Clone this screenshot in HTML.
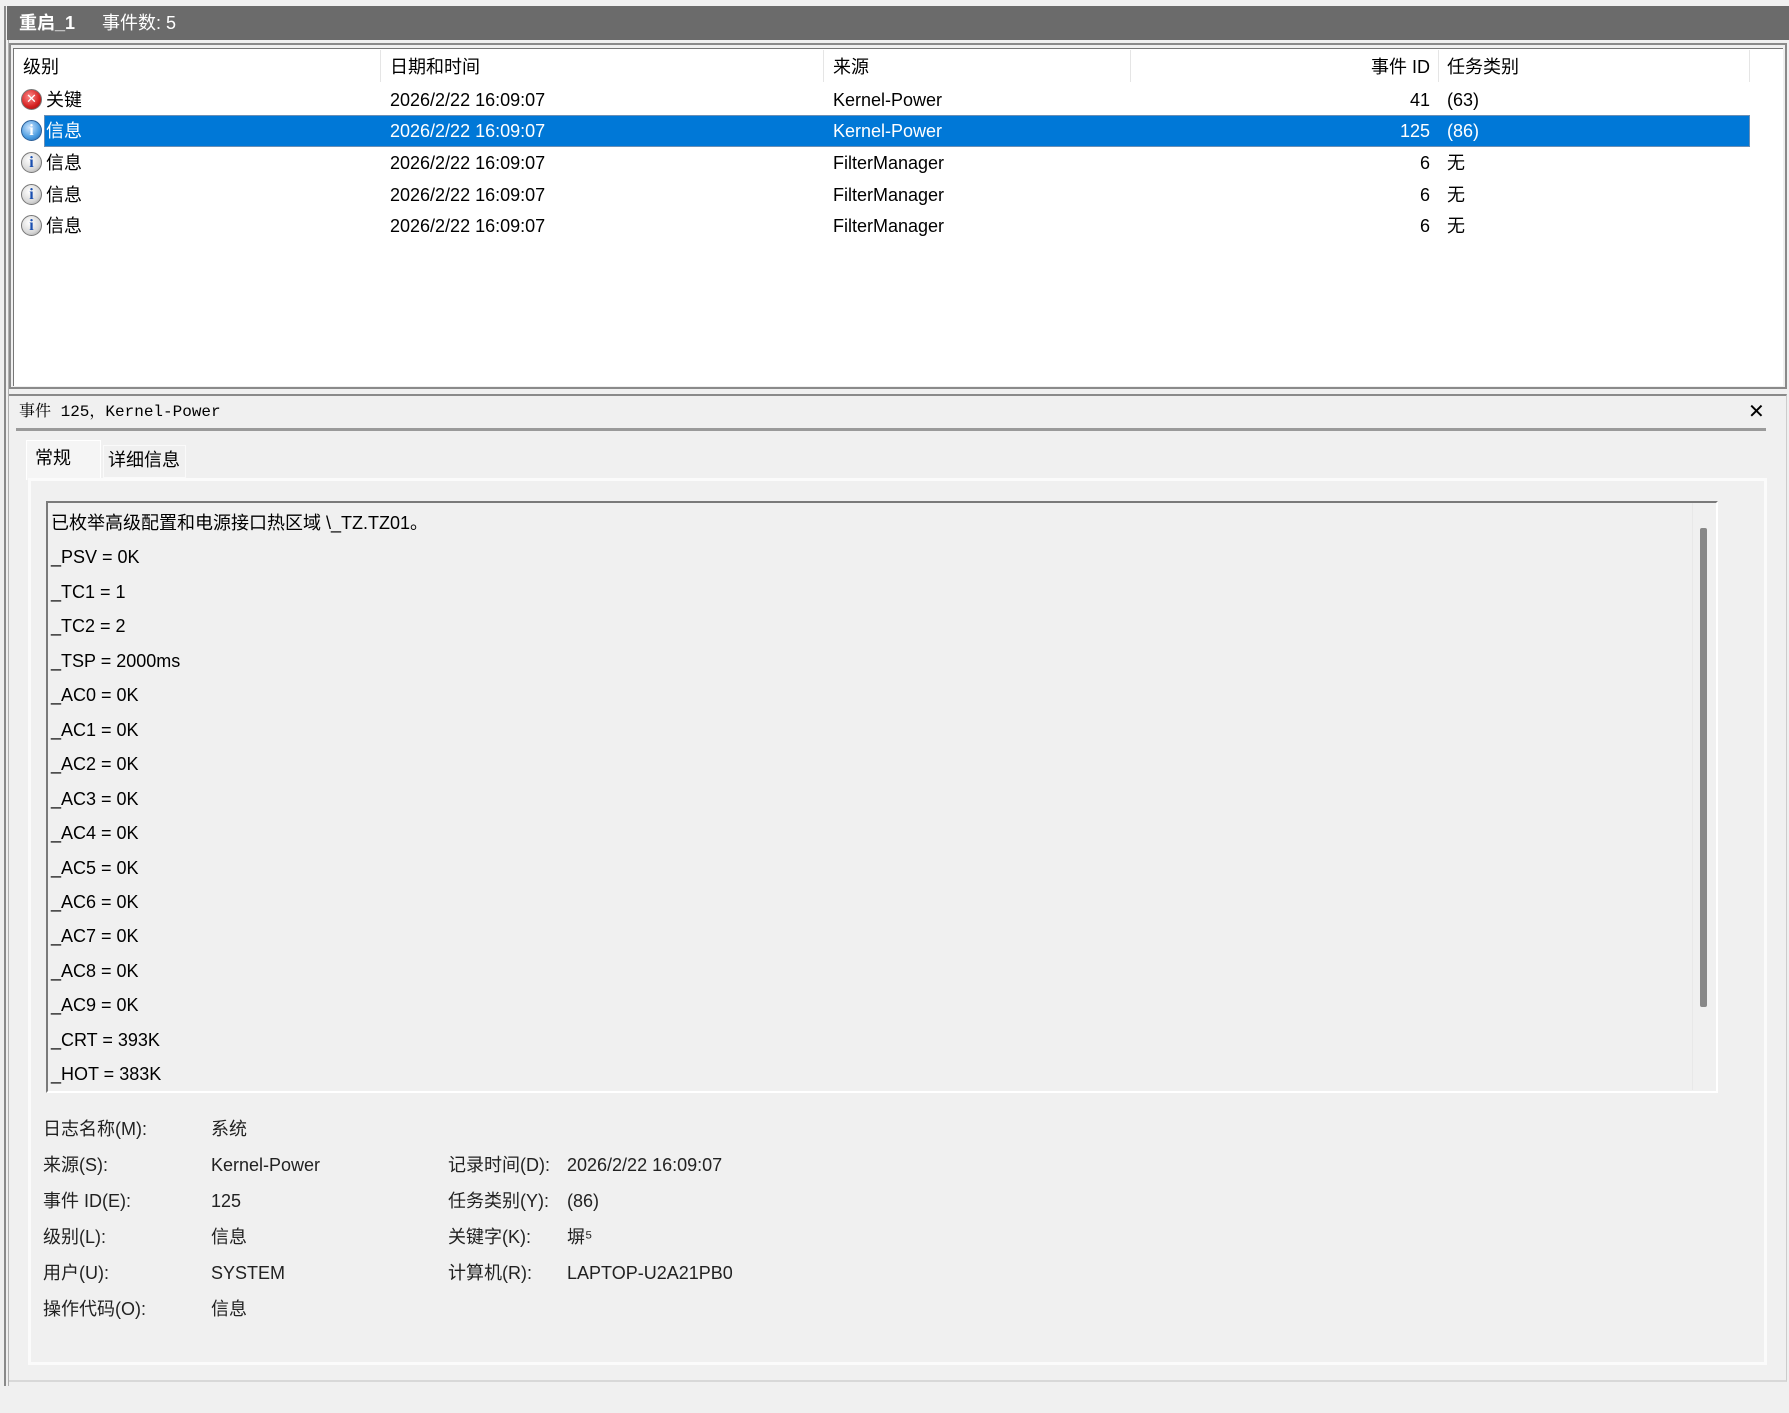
<!DOCTYPE html>
<html><head><meta charset="utf-8"><style>
*{margin:0;padding:0;box-sizing:border-box}
body{width:1789px;height:1413px;background:#f0f0f0;position:relative;overflow:hidden;font-family:"Liberation Sans","Noto Sans CJK SC",sans-serif;font-size:18px;color:#000}
.a{position:absolute;white-space:nowrap}
.t{line-height:24px}
.ico{position:absolute;width:21px;height:21px;border-radius:50%}
.info{background:radial-gradient(circle at 40% 35%,#fff,#d8d8d8 60%,#9a9a9a);border:1px solid #777}
.info::after{content:"i";position:absolute;left:0;right:0;top:0;text-align:center;font:bold 16px/20px "Liberation Serif",serif;color:#1a4fb0}
.infosel{background:radial-gradient(circle at 40% 35%,#cfe6ff,#4a9be0 60%,#1d5fa8);border:1px solid #2a5e98}
.infosel::after{content:"i";position:absolute;left:0;right:0;top:0;text-align:center;font:bold 16px/20px "Liberation Serif",serif;color:#fff}
.err{background:radial-gradient(circle at 40% 35%,#ff8a8a,#d42020 60%,#8a0c0c);border:1px solid #777}
.err::after{content:"✕";position:absolute;left:0;right:0;top:0;text-align:center;font:bold 13px/20px "DejaVu Sans",sans-serif;color:#fff}
</style></head><body>
<div class="a" style="left:4px;top:6px;width:5px;height:1380px;border-left:2px solid #8a8a8a;border-right:1px solid #b0b0b0"></div>
<div class="a" style="left:7px;top:6px;width:1782px;height:34px;background:#6b6b6b"></div>
<div class="a t" style="left:19px;top:11px;color:#fff;font-size:18px;font-weight:bold">重启_1</div>
<div class="a t" style="left:102px;top:11px;color:#fff;font-size:18px">事件数: 5</div>
<div class="a" style="left:9px;top:43px;width:1778px;height:346px;border:2px solid #8a8a8a;background:#f0f0f0"></div>
<div class="a" style="left:13px;top:48px;width:1770px;height:338px;background:#fff;border-left:1px solid #777;border-top:1px solid #777"></div>
<div class="a" style="left:380px;top:50px;width:1px;height:32px;background:#e5e5e5"></div>
<div class="a" style="left:823px;top:50px;width:1px;height:32px;background:#e5e5e5"></div>
<div class="a" style="left:1130px;top:50px;width:1px;height:32px;background:#e5e5e5"></div>
<div class="a" style="left:1438px;top:50px;width:1px;height:32px;background:#e5e5e5"></div>
<div class="a" style="left:1749px;top:50px;width:1px;height:32px;background:#e5e5e5"></div>
<div class="a t" style="left:23px;top:55px">级别</div>
<div class="a t" style="left:390px;top:55px">日期和时间</div>
<div class="a t" style="left:833px;top:55px">来源</div>
<div class="a t" style="left:1330px;top:55px;width:100px;text-align:right">事件 ID</div>
<div class="a t" style="left:1447px;top:55px">任务类别</div>
<div class="a" style="left:44px;top:115px;width:1706px;height:32px;background:#0078d7;border:1px solid #6b8fb5"></div>
<div class="ico err" style="left:21px;top:89px"></div>
<div class="a t" style="left:46px;top:88px">关键</div><div class="a t" style="left:390px;top:88px">2026/2/22 16:09:07</div><div class="a t" style="left:833px;top:88px">Kernel-Power</div><div class="a t" style="left:1330px;top:88px;width:100px;text-align:right">41</div><div class="a t" style="left:1447px;top:88px">(63)</div>
<div class="ico infosel" style="left:21px;top:120px"></div>
<div class="a t" style="left:46px;top:119px;color:#fff">信息</div><div class="a t" style="left:390px;top:119px;color:#fff">2026/2/22 16:09:07</div><div class="a t" style="left:833px;top:119px;color:#fff">Kernel-Power</div><div class="a t" style="left:1330px;top:119px;width:100px;text-align:right;color:#fff">125</div><div class="a t" style="left:1447px;top:119px;color:#fff">(86)</div>
<div class="ico info" style="left:21px;top:152px"></div>
<div class="a t" style="left:46px;top:151px">信息</div><div class="a t" style="left:390px;top:151px">2026/2/22 16:09:07</div><div class="a t" style="left:833px;top:151px">FilterManager</div><div class="a t" style="left:1330px;top:151px;width:100px;text-align:right">6</div><div class="a t" style="left:1447px;top:151px">无</div>
<div class="ico info" style="left:21px;top:184px"></div>
<div class="a t" style="left:46px;top:183px">信息</div><div class="a t" style="left:390px;top:183px">2026/2/22 16:09:07</div><div class="a t" style="left:833px;top:183px">FilterManager</div><div class="a t" style="left:1330px;top:183px;width:100px;text-align:right">6</div><div class="a t" style="left:1447px;top:183px">无</div>
<div class="ico info" style="left:21px;top:215px"></div>
<div class="a t" style="left:46px;top:214px">信息</div><div class="a t" style="left:390px;top:214px">2026/2/22 16:09:07</div><div class="a t" style="left:833px;top:214px">FilterManager</div><div class="a t" style="left:1330px;top:214px;width:100px;text-align:right">6</div><div class="a t" style="left:1447px;top:214px">无</div>

<div class="a" style="left:9px;top:394px;width:1778px;height:988px;border-top:2px solid #8a8a8a;border-right:1px solid #ccc;border-bottom:2px solid #d8d8d8"></div>
<div class="a" style="left:19px;top:401px;font-family:'Liberation Mono','Noto Serif CJK SC',monospace;font-size:16px;line-height:22px">事件 125，Kernel-Power</div>
<div class="a" style="left:1748px;top:400px;font:bold 20px/22px 'DejaVu Sans',sans-serif">✕</div>
<div class="a" style="left:16px;top:428px;width:1750px;height:3px;background:#9a9a9a"></div>
<div class="a" style="left:103px;top:445px;width:83px;height:33px;background:#f0f0f0;border:1px solid #fafafa"></div>
<div class="a" style="left:26px;top:440px;width:75px;height:40px;background:#f5f5f5;border:1px solid #fff;border-bottom:none"></div>
<div class="a t" style="left:35px;top:446px;font-size:18px">常规</div>
<div class="a t" style="left:108px;top:448px;font-size:18px">详细信息</div>
<div class="a" style="left:28px;top:478px;width:1739px;height:887px;border:3px solid #fbfbfb;background:#f0f0f0"></div>
<div class="a" style="left:46px;top:501px;width:1672px;height:592px;border-top:2px solid #7a7a7a;border-left:2px solid #7a7a7a;border-right:2px solid #fff;border-bottom:2px solid #fff;background:#f0f0f0"></div>
<div class="a" style="left:1692px;top:503px;width:1px;height:587px;background:#e8e8e8"></div>
<div class="a" style="left:1700px;top:528px;width:7px;height:479px;background:#888;border-radius:2px"></div>
<div class="a" style="left:51px;top:506px;font-size:18px;line-height:34.45px">已枚举高级配置和电源接口热区域 \_TZ.TZ01。<br>_PSV = 0K<br>_TC1 = 1<br>_TC2 = 2<br>_TSP = 2000ms<br>_AC0 = 0K<br>_AC1 = 0K<br>_AC2 = 0K<br>_AC3 = 0K<br>_AC4 = 0K<br>_AC5 = 0K<br>_AC6 = 0K<br>_AC7 = 0K<br>_AC8 = 0K<br>_AC9 = 0K<br>_CRT = 393K<br>_HOT = 383K</div>
<div class="a" style="left:43px;top:1111px;font-size:18px;line-height:36.1px;color:#222">日志名称(M):<br>来源(S):<br>事件 ID(E):<br>级别(L):<br>用户(U):<br>操作代码(O):</div>
<div class="a" style="left:211px;top:1111px;font-size:18px;line-height:36.1px;color:#222">系统<br>Kernel-Power<br>125<br>信息<br>SYSTEM<br>信息</div>
<div class="a" style="left:448px;top:1147px;font-size:18px;line-height:36.1px;color:#222">记录时间(D):<br>任务类别(Y):<br>关键字(K):<br>计算机(R):</div>
<div class="a" style="left:567px;top:1147px;font-size:18px;line-height:36.1px;color:#222">2026/2/22 16:09:07<br>(86)<br>塀⁵<br>LAPTOP-U2A21PB0</div>
</body></html>
